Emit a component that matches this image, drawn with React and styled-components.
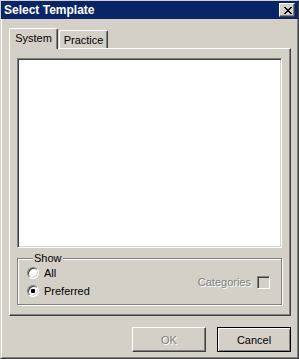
import styled, { createGlobalStyle } from "styled-components";

const GlobalStyle = createGlobalStyle`
  html, body {
    margin: 0;
    padding: 0;
    background: #d4d0c8;
  }
  body {
    font-family: "Liberation Sans", Arial, sans-serif;
    font-size: 11px;
    color: #000;
  }
`;

const Window = styled.div`
  box-sizing: border-box;
  width: 299px;
  height: 359px;
  display: flex;
  flex-direction: column;
  background: #d4d0c8;
  border-top: 1px solid #d4d0c8;
  border-left: 1px solid #d4d0c8;
  border-right: 1px solid #404040;
  border-bottom: 1px solid #404040;
`;

const TitleBar = styled.div`
  height: 18px;
  flex: none;
  display: flex;
  align-items: center;
  justify-content: space-between;
  padding: 0 3px 0 3px;
  background: #0a246a;
  color: #fff;
  font-weight: bold;
  font-size: 12px;
`;

const CloseButton = styled.div`
  box-sizing: border-box;
  width: 16px;
  height: 14px;
  display: flex;
  align-items: center;
  justify-content: center;
  background: #d4d0c8;
  border: 1px solid;
  border-color: #fff #404040 #404040 #fff;
  box-shadow: inset -1px -1px 0 #808080;
  padding-left: 1px;
`;

const Body = styled.div`
  flex: 1;
  display: flex;
  flex-direction: column;
  padding: 9px 6px 5px 7px;
  border-left: 1px solid #fff;
  border-right: 1px solid #808080;
  border-bottom: 1px solid #808080;
`;

const TabRow = styled.div`
  height: 20px;
  display: flex;
  align-items: flex-end;
`;

const Tab = styled.div`
  box-sizing: border-box;
  position: relative;
  z-index: ${(p) => (p.$active ? 1 : 0)};
  width: ${(p) => p.$width}px;
  height: ${(p) => (p.$active ? 21 : 18)}px;
  margin-bottom: ${(p) => (p.$active ? -1 : 0)}px;
  display: flex;
  justify-content: center;
  padding-top: ${(p) => (p.$active ? 3 : 3)}px;
  background: #d4d0c8;
  border-left: 1px solid #fff;
  border-top: 1px solid #fff;
  border-right: 1px solid #404040;
  border-top-left-radius: 2px;
  border-top-right-radius: 2px;
  box-shadow: inset -1px 0 0 #808080;
  margin-left: ${(p) => p.$offset || 0}px;
`;

const Panel = styled.div`
  box-sizing: border-box;
  height: 268px;
  display: flex;
  flex-direction: column;
  padding: 9px 8px 0 7px;
  border-left: 1px solid #fff;
  border-top: 1px solid #fff;
  border-right: 1px solid #404040;
  border-bottom: 1px solid #404040;
  box-shadow: inset -1px -1px 0 #808080;
`;

const ListBox = styled.div`
  box-sizing: border-box;
  height: 190px;
  background: #fff;
  border: 1px solid;
  border-color: #808080 #fff #fff #808080;
  box-shadow: inset 1px 1px 0 #404040, inset -1px -1px 0 #d4d0c8;
`;

const Group = styled.fieldset`
  margin: 4px 0 0 0;
  padding: 0 11px 5px 9px;
  border: 1px solid #808080;
  box-shadow: 1px 1px 0 #fff, inset 1px 1px 0 #fff;
  min-width: 0;
`;

const Legend = styled.legend`
  margin-left: 6px;
  padding: 0 1px;
  line-height: 13px;
  background: #d4d0c8;
`;

const GroupContent = styled.div`
  display: flex;
  align-items: center;
  justify-content: space-between;
`;

const RadioList = styled.div`
  display: flex;
  flex-direction: column;
  gap: 2px;
`;

const RadioRow = styled.label`
  height: 16px;
  display: flex;
  align-items: center;
  gap: 5px;
`;

const RadioDot = styled.span`
  box-sizing: border-box;
  position: relative;
  width: 12px;
  height: 12px;
  border-radius: 50%;
  background: #fff;
  border: 1px solid;
  border-color: #808080 #fff #fff #808080;
  box-shadow: inset 1px 1px 0 #404040, inset -1px -1px 0 #d4d0c8;

  &::after {
    content: "";
    display: ${(p) => (p.$checked ? "block" : "none")};
    position: absolute;
    left: 3px;
    top: 3px;
    width: 4px;
    height: 4px;
    border-radius: 1px;
    background: #000;
  }
`;

const CategoryRow = styled.div`
  display: flex;
  align-items: center;
  gap: 6px;
`;

const DisabledText = styled.span`
  color: #808080;
  text-shadow: 1px 1px 0 #fff;
`;

const CheckBox = styled.span`
  box-sizing: border-box;
  width: 13px;
  height: 13px;
  background: #d4d0c8;
  border: 1px solid;
  border-color: #808080 #fff #fff #808080;
  box-shadow: inset 1px 1px 0 #404040, inset -1px -1px 0 #d4d0c8;
`;

const ButtonRow = styled.div`
  display: flex;
  justify-content: flex-end;
  gap: 11px;
  margin-top: 11px;
`;

const Button = styled.div`
  box-sizing: border-box;
  width: 74px;
  height: 25px;
  display: flex;
  align-items: center;
  justify-content: center;
  background: #d4d0c8;
  border: 1px solid;
  border-color: ${(p) => (p.$default ? "#000" : "#fff #404040 #404040 #fff")};
  box-shadow: ${(p) =>
    p.$default
      ? "inset 1px 1px 0 #fff, inset -1px -1px 0 #808080"
      : "inset -1px -1px 0 #808080"};
  color: ${(p) => (p.$disabled ? "#808080" : "#000")};
  text-shadow: ${(p) => (p.$disabled ? "1px 1px 0 #fff" : "none")};
`;

function CloseGlyph() {
  return (
    <svg width="8" height="7" viewBox="0 0 8 7" shapeRendering="crispEdges">
      <path
        fill="#000"
        d="M0 0h2v1H0zM6 0h2v1H6zM1 1h2v1H1zM5 1h2v1H5zM2 2h4v1H2zM3 3h2v1H3zM2 4h4v1H2zM1 5h2v1H1zM5 5h2v1H5zM0 6h2v1H0zM6 6h2v1H6z"
      />
    </svg>
  );
}

export default function App() {
  return (
    <>
      <GlobalStyle />
      <Window>
        <TitleBar>
          <span>Select Template</span>
          <CloseButton>
            <CloseGlyph />
          </CloseButton>
        </TitleBar>
        <Body>
          <TabRow>
            <Tab $active $width={49}>System</Tab>
            <Tab $width={49} $offset={1}>Practice</Tab>
          </TabRow>
          <Panel>
            <ListBox />
            <Group>
              <Legend>Show</Legend>
              <GroupContent>
                <RadioList>
                  <RadioRow>
                    <RadioDot />
                    All
                  </RadioRow>
                  <RadioRow>
                    <RadioDot $checked />
                    Preferred
                  </RadioRow>
                </RadioList>
                <CategoryRow>
                  <DisabledText>Categories</DisabledText>
                  <CheckBox />
                </CategoryRow>
              </GroupContent>
            </Group>
          </Panel>
          <ButtonRow>
            <Button $disabled>OK</Button>
            <Button $default>Cancel</Button>
          </ButtonRow>
        </Body>
      </Window>
    </>
  );
}
